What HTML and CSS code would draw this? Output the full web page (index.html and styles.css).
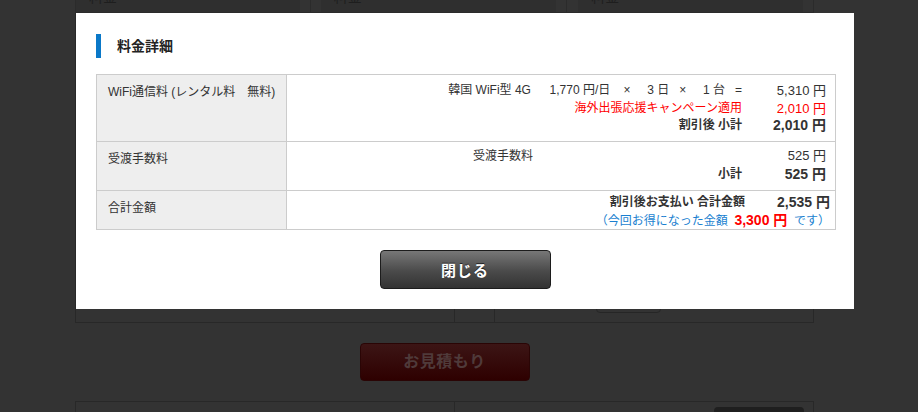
FILE: index.html
```html
<!DOCTYPE html>
<html lang="ja">
<head>
<meta charset="utf-8">
<title>料金詳細</title>
<link rel="stylesheet" href="styles.css">
</head>
<body>
<div class="page">
  <div class="top-strip">
    <div class="strip-cell"><div class="strip-field">料金</div></div>
    <div class="strip-cell"><div class="strip-field">料金</div></div>
    <div class="strip-cell"><div class="strip-field">料金</div></div>
  </div>
  <div class="bg-box mid-box">
    <div class="bg-col bg-col-a"></div>
    <div class="bg-col bg-col-b"></div>
    <div class="bg-col bg-col-c"><div class="bg-small-btn"></div></div>
  </div>
  <div class="estimate-btn">お見積もり</div>
  <div class="bg-box low-box">
    <div class="bg-col bg-col-a"></div>
    <div class="bg-col bg-col-c2"><div class="bg-dark-btn"></div></div>
  </div>
</div>

<div class="modal">
  <h2 class="modal-title">料金詳細</h2>
  <div class="fee-table">
    <div class="fee-row row-wifi">
      <div class="fee-label">WiFi通信料 (レンタル料　無料)</div>
      <div class="fee-value">
        <div class="line"><span class="desc">韓国 WiFi型 4G　  1,770 円/日    ×     3 日   ×     1 台   =</span><span class="amt">5,310 円</span></div>
        <div class="line red"><span class="desc">海外出張応援キャンペーン適用</span><span class="amt">2,010 円</span></div>
        <div class="line strong"><span class="desc">割引後 小計</span><span class="amt">2,010 円</span></div>
      </div>
    </div>
    <div class="fee-row row-handling">
      <div class="fee-label">受渡手数料</div>
      <div class="fee-value">
        <div class="line"><span class="desc desc-left">受渡手数料</span><span class="amt">525 円</span></div>
        <div class="line strong"><span class="desc">小計</span><span class="amt">525 円</span></div>
      </div>
    </div>
    <div class="fee-row row-total">
      <div class="fee-label">合計金額</div>
      <div class="fee-value">
        <div class="line strong total-line"><span class="desc">割引後お支払い 合計金額</span><span class="amt">2,535 円</span></div>
        <div class="line saved-line">（今回お得になった金額  <span class="saved-amt">3,300 円</span>  です）</div>
      </div>
    </div>
  </div>
  <button class="close-btn" type="button">閉じる</button>
</div>
</body>
</html>
```
FILE: styles.css
```css
html, body {
  margin: 0;
  padding: 0;
}
body {
  background: #333333;
  font-family: "Liberation Sans", "Noto Sans CJK JP", sans-serif;
  color: #333;
  width: 918px;
  height: 412px;
  overflow: hidden;
  position: relative;
}

/* ---------- dimmed page behind the modal ---------- */
.page {
  padding-left: 75px;
  width: 739px;
}
.top-strip {
  display: flex;
  height: 12px;
  border-left: 1px solid #2b2b2b;
  border-bottom: 1px solid #2b2b2b;
}
.strip-cell {
  border-right: 1px solid #2b2b2b;
  padding-right: 10px;
  display: flex;
}
.strip-cell:nth-child(1) { width: 227px; }
.strip-cell:nth-child(2) { width: 239px; padding-left: 10px; }
.strip-cell:nth-child(3) { width: 228px; padding-left: 11px; }
.strip-field {
  flex: 1;
  background: #2f2f2f;
  color: #1e1e1e;
  font-size: 14px;
  line-height: 14px;
  padding-left: 13px;
  margin-top: -10px;
  height: 22px;
  overflow: hidden;
}
.bg-box {
  display: flex;
  border: 1px solid #282828;
}
.mid-box {
  height: 308px;
}
.bg-col-a {
  width: 378px;
  border-right: 1px solid #282828;
}
.bg-col-b {
  width: 39px;
  border-right: 1px solid #282828;
}
.bg-col-c {
  flex: 1;
  display: flex;
  align-items: flex-end;
}
.bg-small-btn {
  width: 63px;
  height: 30px;
  margin: 0 0 9px 101px;
  border: 1px solid #262626;
  border-radius: 4px;
}
.estimate-btn {
  width: 168px;
  height: 36px;
  margin: 20px auto 0;
  border: 1px solid #2a0505;
  border-radius: 4px;
  background: linear-gradient(#3c1515, #2e0000);
  color: #4f3a3a;
  font-size: 16px;
  font-weight: bold;
  line-height: 36px;
  text-align: center;
  letter-spacing: 0.5px;
}
.low-box {
  margin-top: 20px;
  height: 40px;
}
.bg-col-c2 {
  flex: 1;
  display: flex;
  justify-content: flex-end;
}
.bg-dark-btn {
  width: 90px;
  height: 30px;
  margin: 5px 9px 0 0;
  border-radius: 4px;
  background: #1f1f1f;
}

/* ---------- modal ---------- */
.modal {
  position: absolute;
  left: 76px;
  top: 13px;
  width: 738px;
  padding: 21px 20px 20px;
  background: #fff;
}
.modal-title {
  margin: 0;
  height: 24px;
  line-height: 24px;
  border-left: 5px solid #0a78c8;
  padding-left: 16px;
  font-size: 14px;
  font-weight: bold;
  color: #222;
}
.fee-table {
  margin-top: 16px;
  width: 738px;
  border: 1px solid #ccc;
  font-size: 12px;
}
.fee-row {
  display: flex;
}
.fee-row + .fee-row {
  border-top: 1px solid #ccc;
}
.fee-label {
  border-right: 1px solid #ccc;
  background: #eeeeee;
  padding: 9px 0 0 11px;
  box-sizing: border-box;
  width: 190px;
  line-height: 16px;
  color: #333;
}
.fee-value {
  flex: 1;
  padding: 0 9px 0 10px;
}
.row-wifi .fee-value { padding-top: 7px; padding-bottom: 6.5px; }
.row-wifi .line { height: 17.5px; line-height: 17.5px; }
.row-handling .fee-value { padding-top: 5px; padding-bottom: 7px; }
.row-total .fee-value { padding-top: 2px; padding-bottom: 1px; padding-right: 5px; }
.line {
  display: flex;
  height: 18px;
  line-height: 18px;
  white-space: pre;
  color: #333;
}
.desc {
  flex: 1;
  text-align: right;
}
.desc-left {
  text-align: left;
  padding-left: 176px;
}
.amt {
  width: 84px;
  text-align: right;
  font-size: 13px;
}
.red { color: #f00; }
.strong .desc { font-weight: bold; }
.strong .amt { font-weight: bold; font-size: 14px; }
.total-line { height: 19px; line-height: 19px; }
.total-line .amt { width: 85px; }
.saved-line {
  display: block;
  text-align: right;
  color: #1a7fd0;
  height: 16px;
  line-height: 16px;
}
.saved-amt {
  color: #f00;
  font-weight: bold;
  font-size: 14px;
}
.close-btn {
  display: block;
  margin: 20px auto 0;
  width: 171px;
  height: 39px;
  border: 1px solid #1c1c1c;
  border-radius: 4px;
  background: linear-gradient(#777777, #4a4a4a 55%, #333333);
  color: #fff;
  font-family: "Liberation Sans", "Noto Sans CJK JP", sans-serif;
  font-size: 15px;
  font-weight: bold;
  text-shadow: 0 -1px 0 #222;
  letter-spacing: 1px;
  cursor: pointer;
}
```
